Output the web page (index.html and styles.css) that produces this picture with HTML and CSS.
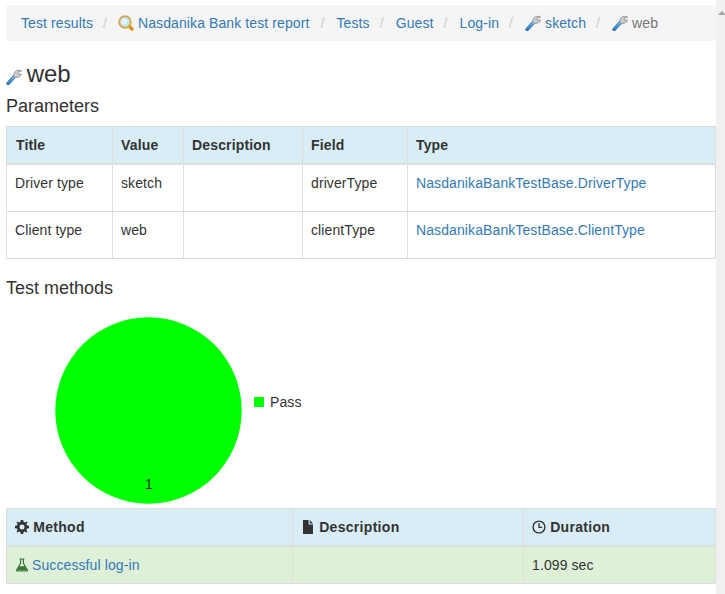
FILE: index.html
```html
<!DOCTYPE html>
<html lang="en">
<head>
<meta charset="utf-8"/>
<title>web</title>
<link rel="stylesheet" href="styles.css">
</head>
<body>
<svg class="icon-defs" width="0" height="0">
  <defs>
    <linearGradient id="handle" x1="0" y1="1" x2="1" y2="0">
      <stop offset="0" stop-color="#2f7fc4"/>
      <stop offset="1" stop-color="#7cc0ee"/>
    </linearGradient>
    <symbol id="wrench" viewBox="0 0 16 16">
      <path d="M2.2 14.4 L8.6 7.4" stroke="#2a6fae" stroke-width="3.6" stroke-linecap="round" fill="none"/>
      <path d="M2.2 14.4 L8.6 7.4" stroke="url(#handle)" stroke-width="2" stroke-linecap="round" fill="none"/>
      <path d="M7.8 7.4 L8.2 3.6 L10.6 1.4 L15.2 1.4 L15.2 2.6 L12.2 2.8 L12.2 5 L15.4 5 L15 6.6 L12 8.4 L9.4 8.6 Z" fill="#c9cbcc" stroke="#85898c" stroke-width=".7" stroke-linejoin="round"/>
    </symbol>
  </defs>
</svg>
<div class="page">
  <div class="content">
    <ol class="breadcrumb">
      <li><a href="#">Test results</a></li>
      <li class="report"><a href="#"><svg class="icon" viewBox="0 0 16 16">
            <path d="M10.8 10.8 L14 14" stroke="#e08a14" stroke-width="3.2" stroke-linecap="round"/>
            <circle cx="7" cy="7" r="5.8" fill="#bfe3f7" stroke="#d9a441" stroke-width="1.8"/>
            <circle cx="6.4" cy="6.4" r="3" fill="#e3f4fd"/>
          </svg> Nasdanika Bank test report</a></li>
      <li><a href="#">Tests</a></li>
      <li><a href="#">Guest</a></li>
      <li><a href="#">Log-in</a></li>
      <li><a href="#"><svg class="icon"><use href="#wrench"/></svg> sketch</a></li>
      <li class="active"><svg class="icon"><use href="#wrench"/></svg> web</li>
    </ol>

    <h1><svg class="icon"><use href="#wrench"/></svg> web</h1>

    <h3>Parameters</h3>
    <table class="table params">
      <thead>
        <tr><th>Title</th><th>Value</th><th>Description</th><th>Field</th><th>Type</th></tr>
      </thead>
      <tbody>
        <tr>
          <td><p>Driver type</p></td>
          <td><p>sketch</p></td>
          <td></td>
          <td><p>driverType</p></td>
          <td><p><a href="#">NasdanikaBankTestBase.DriverType</a></p></td>
        </tr>
        <tr>
          <td><p>Client type</p></td>
          <td><p>web</p></td>
          <td></td>
          <td><p>clientType</p></td>
          <td><p><a href="#">NasdanikaBankTestBase.ClientType</a></p></td>
        </tr>
      </tbody>
    </table>

    <h3>Test methods</h3>
    <div class="chart">
      <svg class="pie" width="187" height="187" viewBox="0 0 187 187">
        <circle cx="93.5" cy="93.5" r="93.2" fill="#00ff00"/>
        <text x="94" y="172" text-anchor="middle">1</text>
      </svg>
      <div class="legend"><span class="swatch"></span>Pass</div>
    </div>

    <table class="table methods">
      <thead>
        <tr>
          <th>
            <svg class="glyph" viewBox="0 0 14 14">
              <path d="M5.8 0 L8.2 0 L8.6 2 L10 2.6 L11.7 1.5 L12.5 2.3 L11.4 4 L12 5.4 L14 5.8 L14 8.2 L12 8.6 L11.4 10 L12.5 11.7 L11.7 12.5 L10 11.4 L8.6 12 L8.2 14 L5.8 14 L5.4 12 L4 11.4 L2.3 12.5 L1.5 11.7 L2.6 10 L2 8.6 L0 8.2 L0 5.8 L2 5.4 L2.6 4 L1.5 2.3 L2.3 1.5 L4 2.6 L5.4 2 Z M7 4.5 A2.5 2.5 0 1 0 7 9.5 A2.5 2.5 0 1 0 7 4.5 Z" fill="#333" fill-rule="evenodd"/>
            </svg>
            Method
          </th>
          <th>
            <svg class="glyph" viewBox="0 0 14 14">
              <path d="M2 0 H7.6 V4.6 H12 V14 H2 Z M8.8 0 L12 3.4 H8.8 Z" fill="#333"/>
            </svg>
            Description
          </th>
          <th>
            <svg class="glyph" viewBox="0 0 14 14">
              <circle cx="7" cy="7" r="5.9" fill="none" stroke="#333" stroke-width="1.4"/>
              <path d="M7 3 V7.4 H10.2" fill="none" stroke="#333" stroke-width="1.3"/>
            </svg>
            Duration
          </th>
        </tr>
      </thead>
      <tbody>
        <tr class="success">
          <td>
            <a href="#">
              <svg class="glyph" viewBox="0 0 14 14">
                <path d="M4.6 1 H9.4 M5.6 1 V5.4 L1.6 12 Q1.2 13 2.2 13 H11.8 Q12.8 13 12.4 12 L8.4 5.4 V1" fill="none" stroke="#3c763d" stroke-width="1.2"/>
                <path d="M4.2 8.2 H9.8 L12.2 12.6 H1.8 Z" fill="#3c763d"/>
              </svg>
              Successful log-in
            </a>
          </td>
          <td></td>
          <td>1.099 sec</td>
        </tr>
      </tbody>
    </table>
  </div>
  <div class="scrollbar"><span class="scroll-arrow"></span></div>
</div>
</body>
</html>
```

FILE: styles.css
```css
html, body {
  margin: 0;
  height: 594px;
  overflow: hidden;
}
body {
  font-family: "Liberation Sans", Arial, sans-serif;
  font-size: 14px;
  line-height: 20px;
  letter-spacing: .1px;
  color: #333;
  background: #fff;
}
a {
  color: #337ab7;
  text-decoration: none;
}
.icon-defs {
  display: block;
  height: 0;
}
.page {
  display: flex;
  height: 594px;
}
.content {
  width: 710px;
  margin-left: 6px;
  padding-top: 5px;
}
.scrollbar {
  width: 9px;
  background: #f1f1f1;
  position: relative;
}
.scroll-arrow {
  position: absolute;
  left: 2px;
  top: 11px;
  border-left: 4px solid transparent;
  border-right: 4px solid transparent;
  border-bottom: 4px solid #a3a3a3;
}
.breadcrumb {
  display: flex;
  list-style: none;
  margin: 0 0 20px;
  padding: 8px 15px;
  background: #f5f5f5;
  border-radius: 4px;
}
.breadcrumb li + li::before {
  content: "/";
  padding: 0 12px 0 10px;
  color: #ccc;
}
.breadcrumb .report::before {
  padding-right: 11px;
}
.breadcrumb .report a {
  margin-right: 1px;
}
.breadcrumb .active {
  color: #777;
}
.icon {
  width: 16px;
  height: 16px;
  vertical-align: -3px;
}
h1 {
  font-size: 24px;
  font-weight: 500;
  line-height: 26px;
  letter-spacing: 0;
  margin: 0 0 9px;
}
h1 .icon {
  margin-right: -2px;
}
h3 {
  font-size: 18px;
  font-weight: 500;
  line-height: 20px;
  letter-spacing: 0;
  margin: 0 0 10px;
}
.table {
  width: 710px;
  table-layout: fixed;
  border-collapse: collapse;
  margin-bottom: 19px;
}
.table th, .table td {
  box-sizing: border-box;
  border: 1px solid #ddd;
  padding: 8px;
  text-align: left;
  vertical-align: top;
}
.table th {
  background: #d9edf7;
  border-bottom-width: 2px;
  letter-spacing: .15px;
}
.params th:first-child {
  padding-left: 9px;
}
.table p {
  margin: 0 0 10px;
}
.params th:nth-child(1) { width: 106px; }
.params th:nth-child(2) { width: 71px; }
.params th:nth-child(3) { width: 119px; }
.params th:nth-child(4) { width: 105px; }
.methods th:nth-child(1) { width: 286px; }
.methods th:nth-child(2) { width: 231px; }
.success td {
  background: #dff0d8;
}
.glyph {
  width: 14px;
  height: 14px;
  vertical-align: -2px;
}
.methods th {
  letter-spacing: .3px;
  padding-left: 9px;
}
.methods th .glyph {
  margin-left: -1px;
}
.success .glyph {
  margin-right: -1px;
}
.chart {
  display: flex;
  align-items: center;
  gap: 12px;
  padding: 9px 0 4px 49px;
}
.pie {
  display: block;
}
.pie text {
  font-size: 14px;
  fill: #333;
}
.legend {
  display: flex;
  align-items: center;
  gap: 6px;
  margin-top: -17px;
}
.swatch {
  width: 10px;
  height: 10px;
  background: #00ff00;
}
```
